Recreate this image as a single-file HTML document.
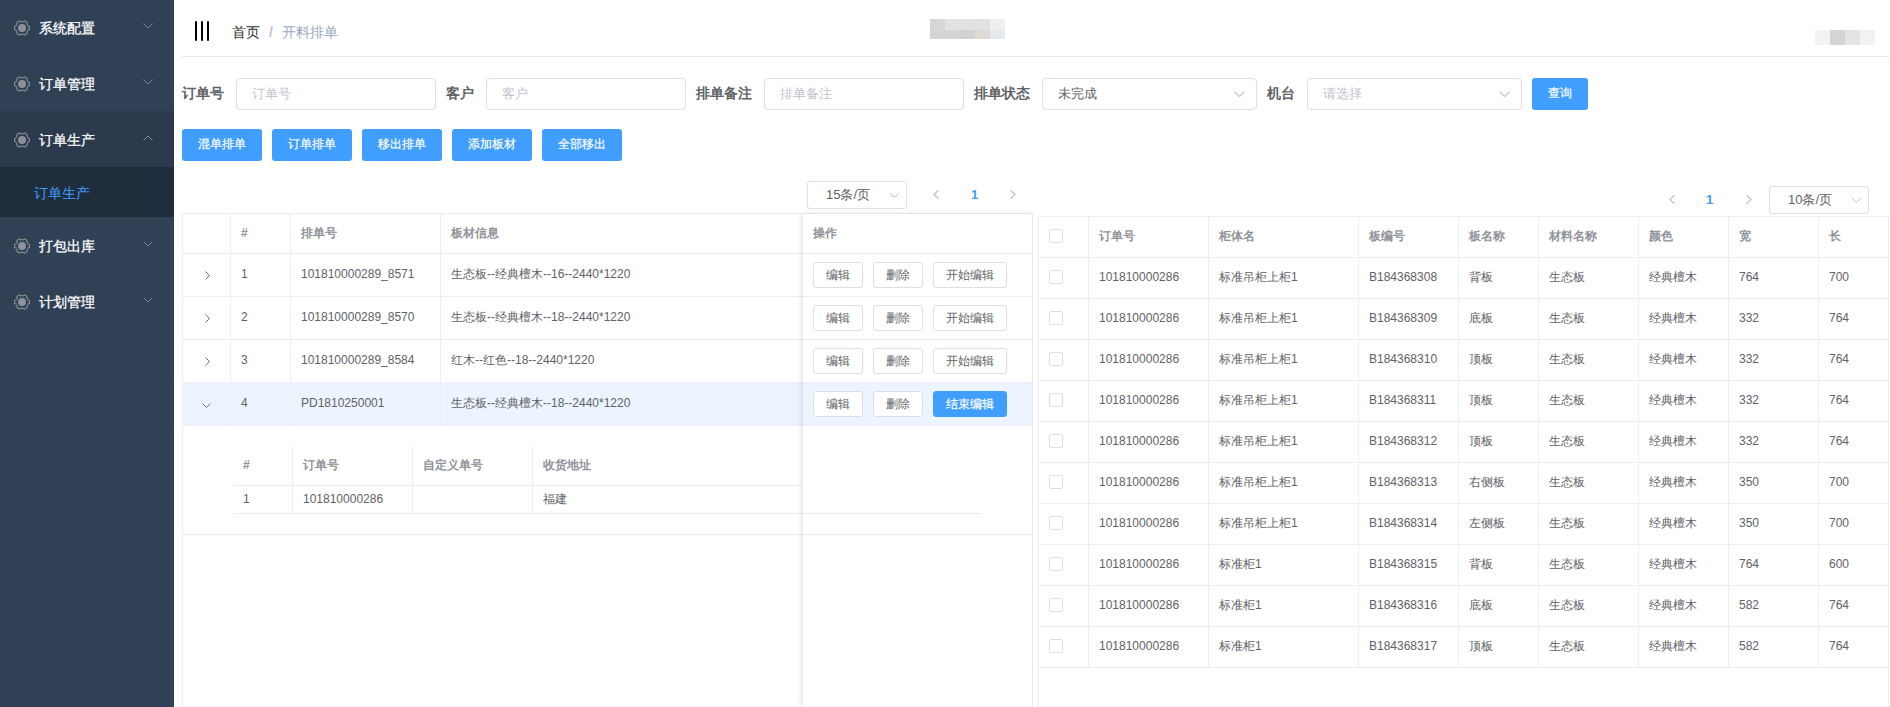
<!DOCTYPE html><html><head><meta charset="utf-8"><style>
*{box-sizing:border-box;margin:0;padding:0}
html,body{width:1890px;height:707px;overflow:hidden;background:#fff;font-family:"Liberation Sans",sans-serif;color:#606266}
#side{position:absolute;left:0;top:0;width:174px;height:707px;background:#304156}
.mi{position:absolute;left:0;width:174px;height:56px;color:#fff;font-size:14px;line-height:56px;-webkit-text-stroke:0.25px currentColor}
.mi .t{position:absolute;left:39px;top:1px}
.gear{position:absolute;left:14px;top:21px;width:16px;height:16px}
.car{position:absolute;left:143px;top:22px}
.hl{position:absolute;left:182px;top:56px;width:1707px;height:1px;background:#e6e6e6}
.lbl{position:absolute;top:78px;height:32px;line-height:31px;font-size:14px;font-weight:bold;color:#606266;white-space:nowrap}
.inp{position:absolute;top:78px;height:32px;border:1px solid #dcdfe6;border-radius:4px;font-size:13px;line-height:30px;padding-left:15px;color:#c0c4cc;white-space:nowrap}
.inp.v{color:#606266}
.btn{position:absolute;height:32px;background:#409eff;border-radius:3px;color:#fff;font-size:12px;line-height:31px;-webkit-text-stroke:0.2px #fff;text-align:center;white-space:nowrap}
.sel{position:absolute;height:28px;width:100px;border:1px solid #dcdfe6;border-radius:3px;font-size:13px;line-height:26px;color:#606266;white-space:nowrap}
.pn{position:absolute;font-size:13px;font-weight:bold;color:#409eff;line-height:14px}
.bl{position:absolute;background:#ebeef5}
.c{position:absolute;font-size:12px;white-space:nowrap;line-height:16px;color:#606266}
.th{color:#909399;font-weight:bold}
.mb{position:absolute;height:26px;border:1px solid #dcdfe6;border-radius:3px;font-size:12px;line-height:24px;text-align:center;color:#606266;background:#fff;white-space:nowrap}
.mb.p{background:#409eff;border-color:#409eff;color:#fff;-webkit-text-stroke:0.2px #fff}
.cb{position:absolute;width:14px;height:14px;border:1px solid #dcdfe6;border-radius:2px;background:#fff}
svg{position:absolute;overflow:visible}
</style></head><body>
<div id="side">
<div class="mi" style="top:-1px;height:56px;background:#304156"><svg class="gear" width="16" height="16" viewBox="0 0 16 16"><path d="M14.18 9.66 L15.43 9.58 L15.43 6.42 L14.18 6.34 L14.01 5.81 L13.80 5.30 L13.54 4.80 L13.24 4.33 L12.90 3.89 L12.53 3.47 L13.09 2.35 L10.35 0.77 L9.66 1.82 L9.11 1.70 L8.56 1.62 L8.00 1.60 L7.44 1.62 L6.89 1.70 L6.34 1.82 L5.65 0.77 L2.91 2.35 L3.47 3.47 L3.10 3.89 L2.76 4.33 L2.46 4.80 L2.20 5.30 L1.99 5.81 L1.82 6.34 L0.57 6.42 L0.57 9.58 L1.82 9.66 L1.99 10.19 L2.20 10.70 L2.46 11.20 L2.76 11.67 L3.10 12.11 L3.47 12.53 L2.91 13.65 L5.65 15.23 L6.34 14.18 L6.89 14.30 L7.44 14.38 L8.00 14.40 L8.56 14.38 L9.11 14.30 L9.66 14.18 L10.35 15.23 L13.09 13.65 L12.53 12.53 L12.90 12.11 L13.24 11.67 L13.54 11.20 L13.80 10.70 L14.01 10.19Z" fill="none" stroke="#858b94" stroke-width="1.1"/><circle cx="8" cy="8" r="4" fill="#8e9199"/></svg><span class="t">系统配置</span><svg class="car" width="10" height="6" style="top:24px" viewBox="0 0 10 6"><path d="M0.5 0.5L5 5L9.5 0.5" fill="none" stroke="#7d8795" stroke-width="1"/></svg></div>
<div class="mi" style="top:55px;height:56px;background:#304156"><svg class="gear" width="16" height="16" viewBox="0 0 16 16"><path d="M14.18 9.66 L15.43 9.58 L15.43 6.42 L14.18 6.34 L14.01 5.81 L13.80 5.30 L13.54 4.80 L13.24 4.33 L12.90 3.89 L12.53 3.47 L13.09 2.35 L10.35 0.77 L9.66 1.82 L9.11 1.70 L8.56 1.62 L8.00 1.60 L7.44 1.62 L6.89 1.70 L6.34 1.82 L5.65 0.77 L2.91 2.35 L3.47 3.47 L3.10 3.89 L2.76 4.33 L2.46 4.80 L2.20 5.30 L1.99 5.81 L1.82 6.34 L0.57 6.42 L0.57 9.58 L1.82 9.66 L1.99 10.19 L2.20 10.70 L2.46 11.20 L2.76 11.67 L3.10 12.11 L3.47 12.53 L2.91 13.65 L5.65 15.23 L6.34 14.18 L6.89 14.30 L7.44 14.38 L8.00 14.40 L8.56 14.38 L9.11 14.30 L9.66 14.18 L10.35 15.23 L13.09 13.65 L12.53 12.53 L12.90 12.11 L13.24 11.67 L13.54 11.20 L13.80 10.70 L14.01 10.19Z" fill="none" stroke="#858b94" stroke-width="1.1"/><circle cx="8" cy="8" r="4" fill="#8e9199"/></svg><span class="t">订单管理</span><svg class="car" width="10" height="6" style="top:24px" viewBox="0 0 10 6"><path d="M0.5 0.5L5 5L9.5 0.5" fill="none" stroke="#7d8795" stroke-width="1"/></svg></div>
<div class="mi" style="top:111px;height:56px;background:#2b3a4c"><svg class="gear" width="16" height="16" viewBox="0 0 16 16"><path d="M14.18 9.66 L15.43 9.58 L15.43 6.42 L14.18 6.34 L14.01 5.81 L13.80 5.30 L13.54 4.80 L13.24 4.33 L12.90 3.89 L12.53 3.47 L13.09 2.35 L10.35 0.77 L9.66 1.82 L9.11 1.70 L8.56 1.62 L8.00 1.60 L7.44 1.62 L6.89 1.70 L6.34 1.82 L5.65 0.77 L2.91 2.35 L3.47 3.47 L3.10 3.89 L2.76 4.33 L2.46 4.80 L2.20 5.30 L1.99 5.81 L1.82 6.34 L0.57 6.42 L0.57 9.58 L1.82 9.66 L1.99 10.19 L2.20 10.70 L2.46 11.20 L2.76 11.67 L3.10 12.11 L3.47 12.53 L2.91 13.65 L5.65 15.23 L6.34 14.18 L6.89 14.30 L7.44 14.38 L8.00 14.40 L8.56 14.38 L9.11 14.30 L9.66 14.18 L10.35 15.23 L13.09 13.65 L12.53 12.53 L12.90 12.11 L13.24 11.67 L13.54 11.20 L13.80 10.70 L14.01 10.19Z" fill="none" stroke="#858b94" stroke-width="1.1"/><circle cx="8" cy="8" r="4" fill="#8e9199"/></svg><span class="t">订单生产</span><svg class="car" width="10" height="6" style="top:24px" viewBox="0 0 10 6"><path d="M0.5 5.5L5 1L9.5 5.5" fill="none" stroke="#7d8795" stroke-width="1"/></svg></div>
<div class="mi" style="top:167px;height:50px;line-height:50px;background:#1f2d3d;color:#409eff;-webkit-text-stroke:0"><span class="t" style="left:34px">订单生产</span></div>
<div class="mi" style="top:217px;height:56px;background:#304156"><svg class="gear" width="16" height="16" viewBox="0 0 16 16"><path d="M14.18 9.66 L15.43 9.58 L15.43 6.42 L14.18 6.34 L14.01 5.81 L13.80 5.30 L13.54 4.80 L13.24 4.33 L12.90 3.89 L12.53 3.47 L13.09 2.35 L10.35 0.77 L9.66 1.82 L9.11 1.70 L8.56 1.62 L8.00 1.60 L7.44 1.62 L6.89 1.70 L6.34 1.82 L5.65 0.77 L2.91 2.35 L3.47 3.47 L3.10 3.89 L2.76 4.33 L2.46 4.80 L2.20 5.30 L1.99 5.81 L1.82 6.34 L0.57 6.42 L0.57 9.58 L1.82 9.66 L1.99 10.19 L2.20 10.70 L2.46 11.20 L2.76 11.67 L3.10 12.11 L3.47 12.53 L2.91 13.65 L5.65 15.23 L6.34 14.18 L6.89 14.30 L7.44 14.38 L8.00 14.40 L8.56 14.38 L9.11 14.30 L9.66 14.18 L10.35 15.23 L13.09 13.65 L12.53 12.53 L12.90 12.11 L13.24 11.67 L13.54 11.20 L13.80 10.70 L14.01 10.19Z" fill="none" stroke="#858b94" stroke-width="1.1"/><circle cx="8" cy="8" r="4" fill="#8e9199"/></svg><span class="t">打包出库</span><svg class="car" width="10" height="6" style="top:24px" viewBox="0 0 10 6"><path d="M0.5 0.5L5 5L9.5 0.5" fill="none" stroke="#7d8795" stroke-width="1"/></svg></div>
<div class="mi" style="top:273px;height:56px;background:#304156"><svg class="gear" width="16" height="16" viewBox="0 0 16 16"><path d="M14.18 9.66 L15.43 9.58 L15.43 6.42 L14.18 6.34 L14.01 5.81 L13.80 5.30 L13.54 4.80 L13.24 4.33 L12.90 3.89 L12.53 3.47 L13.09 2.35 L10.35 0.77 L9.66 1.82 L9.11 1.70 L8.56 1.62 L8.00 1.60 L7.44 1.62 L6.89 1.70 L6.34 1.82 L5.65 0.77 L2.91 2.35 L3.47 3.47 L3.10 3.89 L2.76 4.33 L2.46 4.80 L2.20 5.30 L1.99 5.81 L1.82 6.34 L0.57 6.42 L0.57 9.58 L1.82 9.66 L1.99 10.19 L2.20 10.70 L2.46 11.20 L2.76 11.67 L3.10 12.11 L3.47 12.53 L2.91 13.65 L5.65 15.23 L6.34 14.18 L6.89 14.30 L7.44 14.38 L8.00 14.40 L8.56 14.38 L9.11 14.30 L9.66 14.18 L10.35 15.23 L13.09 13.65 L12.53 12.53 L12.90 12.11 L13.24 11.67 L13.54 11.20 L13.80 10.70 L14.01 10.19Z" fill="none" stroke="#858b94" stroke-width="1.1"/><circle cx="8" cy="8" r="4" fill="#8e9199"/></svg><span class="t">计划管理</span><svg class="car" width="10" height="6" style="top:24px" viewBox="0 0 10 6"><path d="M0.5 0.5L5 5L9.5 0.5" fill="none" stroke="#7d8795" stroke-width="1"/></svg></div>
</div>
<div class="hl"></div>
<div style="position:absolute;left:195px;top:21px;width:2px;height:20px;border-radius:1px;background:#000"></div>
<div style="position:absolute;left:201px;top:21px;width:2px;height:20px;border-radius:1px;background:#000"></div>
<div style="position:absolute;left:207px;top:21px;width:2px;height:20px;border-radius:1px;background:#000"></div>
<div style="position:absolute;left:232px;top:24px;font-size:14px;line-height:16px;color:#303133;white-space:nowrap">首页<span style="color:#c0c4cc;margin:0 9px;font-weight:bold">/</span><span style="color:#97a8be">开料排单</span></div>
<div style="position:absolute;left:930px;top:19px;width:15px;height:11px;background:#d6d6d5"></div>
<div style="position:absolute;left:945px;top:19px;width:15px;height:11px;background:#e2e4e3"></div>
<div style="position:absolute;left:960px;top:19px;width:15px;height:11px;background:#e3e3e1"></div>
<div style="position:absolute;left:975px;top:19px;width:15px;height:11px;background:#e1e1df"></div>
<div style="position:absolute;left:990px;top:19px;width:15px;height:11px;background:#efeff0"></div>
<div style="position:absolute;left:930px;top:30px;width:15px;height:9px;background:#d5d4d3"></div>
<div style="position:absolute;left:945px;top:30px;width:15px;height:9px;background:#d4d6d4"></div>
<div style="position:absolute;left:960px;top:30px;width:15px;height:9px;background:#d3d2d1"></div>
<div style="position:absolute;left:975px;top:30px;width:15px;height:9px;background:#ddd9d6"></div>
<div style="position:absolute;left:990px;top:30px;width:15px;height:9px;background:#e6eaed"></div>
<div style="position:absolute;left:1815px;top:30px;width:15px;height:15px;background:#f4f2f2"></div>
<div style="position:absolute;left:1830px;top:30px;width:15px;height:15px;background:#d3d4d6"></div>
<div style="position:absolute;left:1845px;top:30px;width:15px;height:15px;background:#e3e4e6"></div>
<div style="position:absolute;left:1860px;top:30px;width:15px;height:15px;background:#f2f2f2"></div>
<div class="lbl" style="left:182px">订单号</div>
<div class="inp" style="left:236px;width:200px">订单号</div>
<div class="lbl" style="left:446px">客户</div>
<div class="inp" style="left:486px;width:200px">客户</div>
<div class="lbl" style="left:696px">排单备注</div>
<div class="inp" style="left:764px;width:200px">排单备注</div>
<div class="lbl" style="left:974px">排单状态</div>
<div class="inp v" style="left:1042px;width:215px">未完成</div>
<svg width="11" height="6" style="left:1234px;top:91px" viewBox="0 0 11 6"><path d="M0.5 0.5L5.5 5.5L10.5 0.5" fill="none" stroke="#c0c4cc" stroke-width="1.1"/></svg>
<div class="lbl" style="left:1267px">机台</div>
<div class="inp" style="left:1307px;width:215px">请选择</div>
<svg width="11" height="6" style="left:1499px;top:91px" viewBox="0 0 11 6"><path d="M0.5 0.5L5.5 5.5L10.5 0.5" fill="none" stroke="#c0c4cc" stroke-width="1.1"/></svg>
<div class="btn" style="left:1532px;top:78px;width:56px">查询</div>
<div class="btn" style="left:182px;top:129px;width:80px">混单排单</div>
<div class="btn" style="left:272px;top:129px;width:80px">订单排单</div>
<div class="btn" style="left:362px;top:129px;width:80px">移出排单</div>
<div class="btn" style="left:452px;top:129px;width:80px">添加板材</div>
<div class="btn" style="left:542px;top:129px;width:80px">全部移出</div>
<div class="sel" style="left:807px;top:181px"><span style="position:absolute;left:18px;top:0">15条/页</span></div>
<svg width="9" height="5" style="left:890px;top:193px" viewBox="0 0 9 5"><path d="M0.3 0.3L4.5 4.5L8.7 0.3" fill="none" stroke="#c0c4cc" stroke-width="1"/></svg>
<svg width="6" height="9" style="left:933px;top:190px" viewBox="0 0 6 9"><path d="M5.5 0.3L1 4.5L5.5 8.7" fill="none" stroke="#c0c4cc" stroke-width="1.3"/></svg>
<div class="pn" style="left:971px;top:188px">1</div>
<svg width="6" height="9" style="left:1010px;top:190px" viewBox="0 0 6 9"><path d="M0.5 0.3L5 4.5L0.5 8.7" fill="none" stroke="#c0c4cc" stroke-width="1.3"/></svg>
<svg width="6" height="9" style="left:1669px;top:195px" viewBox="0 0 6 9"><path d="M5.5 0.3L1 4.5L5.5 8.7" fill="none" stroke="#c0c4cc" stroke-width="1.3"/></svg>
<div class="pn" style="left:1706px;top:193px">1</div>
<svg width="6" height="9" style="left:1746px;top:195px" viewBox="0 0 6 9"><path d="M0.5 0.3L5 4.5L0.5 8.7" fill="none" stroke="#c0c4cc" stroke-width="1.3"/></svg>
<div class="sel" style="left:1769px;top:186px"><span style="position:absolute;left:18px;top:0">10条/页</span></div>
<svg width="9" height="5" style="left:1852px;top:198px" viewBox="0 0 9 5"><path d="M0.3 0.3L4.5 4.5L8.7 0.3" fill="none" stroke="#c0c4cc" stroke-width="1"/></svg>
<div style="position:absolute;left:183px;top:383px;width:849px;height:42px;background:#ecf5ff"></div>
<div class="bl" style="left:182px;top:213px;width:851px;height:1px;background:#ebeef5"></div>
<div class="bl" style="left:182px;top:253px;width:850px;height:1px;background:#ebeef5"></div>
<div class="bl" style="left:182px;top:296px;width:850px;height:1px;background:#ebeef5"></div>
<div class="bl" style="left:182px;top:339px;width:850px;height:1px;background:#ebeef5"></div>
<div class="bl" style="left:182px;top:382px;width:850px;height:1px;background:#ebeef5"></div>
<div class="bl" style="left:182px;top:425px;width:850px;height:1px;background:#ebeef5"></div>
<div class="bl" style="left:182px;top:213px;width:1px;height:494px;background:#ebeef5"></div>
<div class="bl" style="left:1032px;top:213px;width:1px;height:494px;background:#ebeef5"></div>
<div class="bl" style="left:230px;top:213px;width:1px;height:212px;background:#ebeef5"></div>
<div class="bl" style="left:290px;top:213px;width:1px;height:212px;background:#ebeef5"></div>
<div class="bl" style="left:440px;top:213px;width:1px;height:212px;background:#ebeef5"></div>
<div class="c th" style="left:241px;top:225px">#</div>
<div class="c th" style="left:301px;top:225px">排单号</div>
<div class="c th" style="left:451px;top:225px">板材信息</div>
<div class="c " style="left:241px;top:266px">1</div>
<div class="c " style="left:301px;top:266px">101810000289_8571</div>
<div class="c " style="left:451px;top:266px">生态板--经典檀木--16--2440*1220</div>
<svg width="5" height="9" style="left:205px;top:271px" viewBox="0 0 5 9"><path d="M0.5 0.5L4.5 4.5L0.5 8.5" fill="none" stroke="#6b6e75" stroke-width="1"/></svg>
<div class="c " style="left:241px;top:309px">2</div>
<div class="c " style="left:301px;top:309px">101810000289_8570</div>
<div class="c " style="left:451px;top:309px">生态板--经典檀木--18--2440*1220</div>
<svg width="5" height="9" style="left:205px;top:314px" viewBox="0 0 5 9"><path d="M0.5 0.5L4.5 4.5L0.5 8.5" fill="none" stroke="#6b6e75" stroke-width="1"/></svg>
<div class="c " style="left:241px;top:352px">3</div>
<div class="c " style="left:301px;top:352px">101810000289_8584</div>
<div class="c " style="left:451px;top:352px">红木--红色--18--2440*1220</div>
<svg width="5" height="9" style="left:205px;top:357px" viewBox="0 0 5 9"><path d="M0.5 0.5L4.5 4.5L0.5 8.5" fill="none" stroke="#6b6e75" stroke-width="1"/></svg>
<div class="c " style="left:241px;top:395px">4</div>
<div class="c " style="left:301px;top:395px">PD1810250001</div>
<div class="c " style="left:451px;top:395px">生态板--经典檀木--18--2440*1220</div>
<svg width="9" height="5" style="left:202px;top:403px" viewBox="0 0 9 5"><path d="M0.5 0.5L4.5 4.5L8.5 0.5" fill="none" stroke="#6b6e75" stroke-width="1"/></svg>
<div class="bl" style="left:182px;top:534px;width:850px;height:1px;background:#ebeef5"></div>
<div class="bl" style="left:233px;top:485px;width:749px;height:1px;background:#ebeef5"></div>
<div class="bl" style="left:233px;top:513px;width:749px;height:1px;background:#ebeef5"></div>
<div class="bl" style="left:292px;top:446px;width:1px;height:67px;background:#ebeef5"></div>
<div class="bl" style="left:412px;top:446px;width:1px;height:67px;background:#ebeef5"></div>
<div class="bl" style="left:532px;top:446px;width:1px;height:67px;background:#ebeef5"></div>
<div class="c th" style="left:243px;top:457px">#</div>
<div class="c th" style="left:303px;top:457px">订单号</div>
<div class="c th" style="left:423px;top:457px">自定义单号</div>
<div class="c th" style="left:543px;top:457px">收货地址</div>
<div class="c " style="left:243px;top:491px">1</div>
<div class="c " style="left:303px;top:491px">101810000286</div>
<div class="c " style="left:543px;top:491px">福建</div>
<div style="position:absolute;left:803px;top:214px;width:229px;height:493px;box-shadow:-2px 0 5px rgba(0,0,0,.10)"></div>
<div style="position:absolute;left:803px;top:214px;width:229px;height:493px;background:#fff"></div>
<div style="position:absolute;left:803px;top:383px;width:229px;height:42px;background:#ecf5ff"></div>
<div class="bl" style="left:803px;top:253px;width:229px;height:1px;background:#ebeef5"></div>
<div class="bl" style="left:803px;top:296px;width:229px;height:1px;background:#ebeef5"></div>
<div class="bl" style="left:803px;top:339px;width:229px;height:1px;background:#ebeef5"></div>
<div class="bl" style="left:803px;top:382px;width:229px;height:1px;background:#ebeef5"></div>
<div class="bl" style="left:803px;top:425px;width:229px;height:1px;background:#ebeef5"></div>
<div class="bl" style="left:803px;top:534px;width:229px;height:1px;background:#ebeef5"></div>
<div class="bl" style="left:803px;top:513px;width:179px;height:1px;background:#ebeef5"></div>
<div class="c th" style="left:813px;top:225px">操作</div>
<div class="mb" style="left:813px;top:262px;width:50px">编辑</div>
<div class="mb" style="left:873px;top:262px;width:50px">删除</div>
<div class="mb" style="left:933px;top:262px;width:74px">开始编辑</div>
<div class="mb" style="left:813px;top:305px;width:50px">编辑</div>
<div class="mb" style="left:873px;top:305px;width:50px">删除</div>
<div class="mb" style="left:933px;top:305px;width:74px">开始编辑</div>
<div class="mb" style="left:813px;top:348px;width:50px">编辑</div>
<div class="mb" style="left:873px;top:348px;width:50px">删除</div>
<div class="mb" style="left:933px;top:348px;width:74px">开始编辑</div>
<div class="mb" style="left:813px;top:391px;width:50px">编辑</div>
<div class="mb" style="left:873px;top:391px;width:50px">删除</div>
<div class="mb p" style="left:933px;top:391px;width:74px">结束编辑</div>
<div class="bl" style="left:1038px;top:216px;width:851px;height:1px;background:#ebeef5"></div>
<div class="bl" style="left:1038px;top:216px;width:1px;height:491px;background:#ebeef5"></div>
<div class="bl" style="left:1888px;top:216px;width:1px;height:491px;background:#ebeef5"></div>
<div class="bl" style="left:1088px;top:216px;width:1px;height:451px;background:#ebeef5"></div>
<div class="bl" style="left:1208px;top:216px;width:1px;height:451px;background:#ebeef5"></div>
<div class="bl" style="left:1358px;top:216px;width:1px;height:451px;background:#ebeef5"></div>
<div class="bl" style="left:1458px;top:216px;width:1px;height:451px;background:#ebeef5"></div>
<div class="bl" style="left:1538px;top:216px;width:1px;height:451px;background:#ebeef5"></div>
<div class="bl" style="left:1638px;top:216px;width:1px;height:451px;background:#ebeef5"></div>
<div class="bl" style="left:1728px;top:216px;width:1px;height:451px;background:#ebeef5"></div>
<div class="bl" style="left:1818px;top:216px;width:1px;height:451px;background:#ebeef5"></div>
<div class="bl" style="left:1038px;top:257px;width:850px;height:1px;background:#ebeef5"></div>
<div class="cb" style="left:1049px;top:229px"></div>
<div class="c th" style="left:1099px;top:228px">订单号</div>
<div class="c th" style="left:1219px;top:228px">柜体名</div>
<div class="c th" style="left:1369px;top:228px">板编号</div>
<div class="c th" style="left:1469px;top:228px">板名称</div>
<div class="c th" style="left:1549px;top:228px">材料名称</div>
<div class="c th" style="left:1649px;top:228px">颜色</div>
<div class="c th" style="left:1739px;top:228px">宽</div>
<div class="c th" style="left:1829px;top:228px">长</div>
<div class="bl" style="left:1038px;top:298px;width:850px;height:1px;background:#ebeef5"></div>
<div class="cb" style="left:1049px;top:270px"></div>
<div class="c " style="left:1099px;top:269px">101810000286</div>
<div class="c " style="left:1219px;top:269px">标准吊柜上柜1</div>
<div class="c " style="left:1369px;top:269px">B184368308</div>
<div class="c " style="left:1469px;top:269px">背板</div>
<div class="c " style="left:1549px;top:269px">生态板</div>
<div class="c " style="left:1649px;top:269px">经典檀木</div>
<div class="c " style="left:1739px;top:269px">764</div>
<div class="c " style="left:1829px;top:269px">700</div>
<div class="bl" style="left:1038px;top:339px;width:850px;height:1px;background:#ebeef5"></div>
<div class="cb" style="left:1049px;top:311px"></div>
<div class="c " style="left:1099px;top:310px">101810000286</div>
<div class="c " style="left:1219px;top:310px">标准吊柜上柜1</div>
<div class="c " style="left:1369px;top:310px">B184368309</div>
<div class="c " style="left:1469px;top:310px">底板</div>
<div class="c " style="left:1549px;top:310px">生态板</div>
<div class="c " style="left:1649px;top:310px">经典檀木</div>
<div class="c " style="left:1739px;top:310px">332</div>
<div class="c " style="left:1829px;top:310px">764</div>
<div class="bl" style="left:1038px;top:380px;width:850px;height:1px;background:#ebeef5"></div>
<div class="cb" style="left:1049px;top:352px"></div>
<div class="c " style="left:1099px;top:351px">101810000286</div>
<div class="c " style="left:1219px;top:351px">标准吊柜上柜1</div>
<div class="c " style="left:1369px;top:351px">B184368310</div>
<div class="c " style="left:1469px;top:351px">顶板</div>
<div class="c " style="left:1549px;top:351px">生态板</div>
<div class="c " style="left:1649px;top:351px">经典檀木</div>
<div class="c " style="left:1739px;top:351px">332</div>
<div class="c " style="left:1829px;top:351px">764</div>
<div class="bl" style="left:1038px;top:421px;width:850px;height:1px;background:#ebeef5"></div>
<div class="cb" style="left:1049px;top:393px"></div>
<div class="c " style="left:1099px;top:392px">101810000286</div>
<div class="c " style="left:1219px;top:392px">标准吊柜上柜1</div>
<div class="c " style="left:1369px;top:392px">B184368311</div>
<div class="c " style="left:1469px;top:392px">顶板</div>
<div class="c " style="left:1549px;top:392px">生态板</div>
<div class="c " style="left:1649px;top:392px">经典檀木</div>
<div class="c " style="left:1739px;top:392px">332</div>
<div class="c " style="left:1829px;top:392px">764</div>
<div class="bl" style="left:1038px;top:462px;width:850px;height:1px;background:#ebeef5"></div>
<div class="cb" style="left:1049px;top:434px"></div>
<div class="c " style="left:1099px;top:433px">101810000286</div>
<div class="c " style="left:1219px;top:433px">标准吊柜上柜1</div>
<div class="c " style="left:1369px;top:433px">B184368312</div>
<div class="c " style="left:1469px;top:433px">顶板</div>
<div class="c " style="left:1549px;top:433px">生态板</div>
<div class="c " style="left:1649px;top:433px">经典檀木</div>
<div class="c " style="left:1739px;top:433px">332</div>
<div class="c " style="left:1829px;top:433px">764</div>
<div class="bl" style="left:1038px;top:503px;width:850px;height:1px;background:#ebeef5"></div>
<div class="cb" style="left:1049px;top:475px"></div>
<div class="c " style="left:1099px;top:474px">101810000286</div>
<div class="c " style="left:1219px;top:474px">标准吊柜上柜1</div>
<div class="c " style="left:1369px;top:474px">B184368313</div>
<div class="c " style="left:1469px;top:474px">右侧板</div>
<div class="c " style="left:1549px;top:474px">生态板</div>
<div class="c " style="left:1649px;top:474px">经典檀木</div>
<div class="c " style="left:1739px;top:474px">350</div>
<div class="c " style="left:1829px;top:474px">700</div>
<div class="bl" style="left:1038px;top:544px;width:850px;height:1px;background:#ebeef5"></div>
<div class="cb" style="left:1049px;top:516px"></div>
<div class="c " style="left:1099px;top:515px">101810000286</div>
<div class="c " style="left:1219px;top:515px">标准吊柜上柜1</div>
<div class="c " style="left:1369px;top:515px">B184368314</div>
<div class="c " style="left:1469px;top:515px">左侧板</div>
<div class="c " style="left:1549px;top:515px">生态板</div>
<div class="c " style="left:1649px;top:515px">经典檀木</div>
<div class="c " style="left:1739px;top:515px">350</div>
<div class="c " style="left:1829px;top:515px">700</div>
<div class="bl" style="left:1038px;top:585px;width:850px;height:1px;background:#ebeef5"></div>
<div class="cb" style="left:1049px;top:557px"></div>
<div class="c " style="left:1099px;top:556px">101810000286</div>
<div class="c " style="left:1219px;top:556px">标准柜1</div>
<div class="c " style="left:1369px;top:556px">B184368315</div>
<div class="c " style="left:1469px;top:556px">背板</div>
<div class="c " style="left:1549px;top:556px">生态板</div>
<div class="c " style="left:1649px;top:556px">经典檀木</div>
<div class="c " style="left:1739px;top:556px">764</div>
<div class="c " style="left:1829px;top:556px">600</div>
<div class="bl" style="left:1038px;top:626px;width:850px;height:1px;background:#ebeef5"></div>
<div class="cb" style="left:1049px;top:598px"></div>
<div class="c " style="left:1099px;top:597px">101810000286</div>
<div class="c " style="left:1219px;top:597px">标准柜1</div>
<div class="c " style="left:1369px;top:597px">B184368316</div>
<div class="c " style="left:1469px;top:597px">底板</div>
<div class="c " style="left:1549px;top:597px">生态板</div>
<div class="c " style="left:1649px;top:597px">经典檀木</div>
<div class="c " style="left:1739px;top:597px">582</div>
<div class="c " style="left:1829px;top:597px">764</div>
<div class="bl" style="left:1038px;top:667px;width:850px;height:1px;background:#ebeef5"></div>
<div class="cb" style="left:1049px;top:639px"></div>
<div class="c " style="left:1099px;top:638px">101810000286</div>
<div class="c " style="left:1219px;top:638px">标准柜1</div>
<div class="c " style="left:1369px;top:638px">B184368317</div>
<div class="c " style="left:1469px;top:638px">顶板</div>
<div class="c " style="left:1549px;top:638px">生态板</div>
<div class="c " style="left:1649px;top:638px">经典檀木</div>
<div class="c " style="left:1739px;top:638px">582</div>
<div class="c " style="left:1829px;top:638px">764</div>
</body></html>
